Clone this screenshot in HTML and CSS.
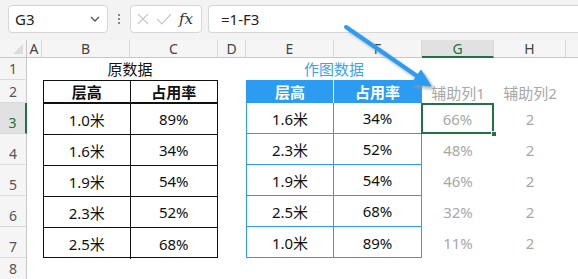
FILE: index.html
```html
<!DOCTYPE html>
<html lang="zh">
<head>
    <meta charset="UTF-8">
    <title>层高占用率</title>
    <link rel="stylesheet" href="styles.css">
</head>
<body>
    <div class="topbar">
        <div class="namebox">
            <span>G3</span>
            <svg width="12" height="8" viewBox="0 0 12 8"><path d="M2 2 L6 6 L10 2" fill="none" stroke="#555" stroke-width="1.3"/></svg>
        </div>
        <div class="dots"><i></i><i></i><i></i></div>
        <div class="fxbox">
            <svg width="16" height="16" viewBox="0 0 16 16"><path d="M3 3 L13 13 M13 3 L3 13" stroke="#c8c8c8" stroke-width="1.2"/></svg>
            <svg width="18" height="16" viewBox="0 0 18 16"><path d="M2 8 L7 13 L16 3" fill="none" stroke="#c8c8c8" stroke-width="1.2"/></svg>
            <span class="fx">fx</span>
        </div>
        <div class="formula">=1-F3</div>
    </div>

    <div class="sheet">
        <!-- column headers -->
        <div class="corner"><span></span></div>
        <div class="colhdr">A</div>
        <div class="colhdr">B</div>
        <div class="colhdr">C</div>
        <div class="colhdr">D</div>
        <div class="colhdr">E</div>
        <div class="colhdr">F</div>
        <div class="colhdr active">G</div>
        <div class="colhdr">H</div>
        <div class="colhdr last"></div>

        <!-- row headers -->
        <div class="rowhdr r1">1</div>
        <div class="rowhdr r2">2</div>
        <div class="rowhdr r3 active">3</div>
        <div class="rowhdr r4">4</div>
        <div class="rowhdr r5">5</div>
        <div class="rowhdr r6">6</div>
        <div class="rowhdr r7">7</div>
        <div class="rowhdr r8">8</div>

        <div class="title title-src">原数据</div>
        <div class="title title-chart">作图数据</div>

        <div class="tbl tbl-src">
            <div class="th">层高</div><div class="th">占用率</div>
            <div>1.0米</div><div>89%</div>
            <div>1.6米</div><div>34%</div>
            <div>1.9米</div><div>54%</div>
            <div>2.3米</div><div>52%</div>
            <div>2.5米</div><div>68%</div>
        </div>

        <div class="tbl tbl-chart">
            <div class="th">层高</div><div class="th">占用率</div>
            <div>1.6米</div><div>34%</div>
            <div>2.3米</div><div>52%</div>
            <div>1.9米</div><div>54%</div>
            <div>2.5米</div><div>68%</div>
            <div>1.0米</div><div>89%</div>
        </div>

        <div class="helper">
            <div class="hd">辅助列1</div><div class="hd">辅助列2</div>
            <div class="sel">66%<span class="handle"></span></div><div>2</div>
            <div>48%</div><div>2</div>
            <div>46%</div><div>2</div>
            <div>32%</div><div>2</div>
            <div>11%</div><div>2</div>
        </div>
    </div>

    <svg class="arrow" width="578" height="279" viewBox="0 0 578 279">
        <defs>
            <filter id="shadow" x="-20%" y="-20%" width="140%" height="140%">
                <feGaussianBlur stdDeviation="1.5"/>
            </filter>
        </defs>
        <g transform="translate(3 3)" fill="#9a9a9a" stroke="#9a9a9a" opacity="0.7" filter="url(#shadow)">
            <line x1="346" y1="27" x2="417" y2="76" stroke-width="4"/>
            <polygon points="431,86 411,84 421,70"/>
        </g>
        <g fill="#2b9cf2" stroke="#2b9cf2">
            <line x1="346" y1="27" x2="417" y2="76" stroke-width="4" stroke-linecap="round"/>
            <polygon points="431,86 411,84 421,70"/>
        </g>
    </svg>
</body>
</html>
```

FILE: styles.css
```css
:root {
    --green: #217346;
    --blue: #2b9cf2;
    --grid-line: #dadada;
    --hdr-bg: #f5f5f5;
}
* {
    box-sizing: border-box;
}
body {
    margin: 0;
    width: 578px;
    height: 279px;
    overflow: hidden;
    font-family: "Noto Sans", "Noto Sans CJK SC", sans-serif;
    background: white;
    position: relative;
}
.topbar {
    height: 40px;
    background: #f3f3f3;
    display: flex;
    align-items: flex-start;
    padding: 5px 0 0 8px;
}
.namebox {
    width: 100px;
    height: 28px;
    background: white;
    border: 1px solid #d6d6d6;
    border-radius: 4px;
    display: flex;
    align-items: center;
    justify-content: space-between;
    padding: 0 6px 0 6px;
    font-size: 15px;
    color: #222;
}
.dots {
    width: 22px;
    height: 28px;
    display: flex;
    flex-direction: column;
    align-items: center;
    justify-content: center;
    gap: 2px;
}
.dots i {
    width: 2px;
    height: 2px;
    background: #888;
}
.fxbox {
    width: 72px;
    height: 28px;
    background: white;
    border: 1px solid #d6d6d6;
    border-radius: 4px;
    display: flex;
    align-items: center;
    padding: 0 4px 0 4px;
    gap: 4px;
}
.fx {
    font-family: "DejaVu Serif", serif;
    font-style: italic;
    font-size: 15px;
    color: #333;
    margin-left: 2px;
}
.formula {
    flex: 1;
    margin-left: 6px;
    height: 28px;
    background: white;
    border: 1px solid #d6d6d6;
    border-right: none;
    border-radius: 4px 0 0 4px;
    padding: 0 0 0 12px;
    line-height: 26px;
    font-size: 15px;
    color: #222;
}
.sheet {
    display: grid;
    grid-template-columns: 27px 15px 88px 88px 28px 88px 88px 72px 72px 1fr;
    grid-template-rows: 18px 22px 23px repeat(5, 31px) 1fr;
    height: 239px;
}
.corner {
    background: var(--hdr-bg);
    border-bottom: 1px solid #c8c8c8;
    border-right: 1px solid #c8c8c8;
    position: relative;
}
.corner span {
    position: absolute;
    right: 3px;
    bottom: 3px;
    width: 0;
    height: 0;
    border-left: 10px solid transparent;
    border-bottom: 10px solid #dcdcdc;
}
.colhdr {
    background: var(--hdr-bg);
    border-bottom: 1px solid #c8c8c8;
    border-right: 1px solid var(--grid-line);
    text-align: center;
    font-size: 14px;
    line-height: 17px;
    color: #444;
}
.colhdr.active {
    background: #e1e1e1;
    border-bottom: 2px solid var(--green);
    color: var(--green);
}
.colhdr.last {
    border-right: none;
}
.rowhdr {
    grid-column: 1;
    background: var(--hdr-bg);
    border-right: 1px solid #c8c8c8;
    border-bottom: 1px solid var(--grid-line);
    font-size: 14px;
    color: #555;
    display: flex;
    align-items: flex-end;
    justify-content: center;
    padding-bottom: 1px;
}
.rowhdr.active {
    background: #e1e1e1;
    border-right: 2px solid var(--green);
    color: var(--green);
}
.r1 { grid-row: 2; }
.r2 { grid-row: 3; }
.r3 { grid-row: 4; }
.r4 { grid-row: 5; }
.r5 { grid-row: 6; }
.r6 { grid-row: 7; }
.r7 { grid-row: 8; }
.r8 { grid-row: 9; border-bottom: none; }
.title {
    grid-row: 2;
    font-size: 15px;
    text-align: center;
    line-height: 22px;
}
.title-src {
    grid-column: 3 / 5;
    color: #111;
}
.title-chart {
    grid-column: 6 / 8;
    color: #3ea2f4;
}
.tbl {
    grid-row: 3 / 9;
    display: grid;
    grid-template-columns: 1fr 1fr;
    grid-template-rows: 23px repeat(5, 31px);
    font-size: 15px;
    color: #111;
}
.tbl > div {
    display: flex;
    align-items: center;
    justify-content: center;
}
.tbl .th {
    font-weight: bold;
}
.tbl-src {
    grid-column: 3 / 5;
    margin-left: 1px;
    border: 1px solid #111;
}
.tbl-src > div {
    border-bottom: 1px solid #111;
}
.tbl-src > div:nth-child(odd) {
    border-right: 1px solid #111;
}
.tbl-src .th {
    border-bottom: 2px solid #111;
}
.tbl-src > div:nth-last-child(-n+2) {
    border-bottom: none;
}
.tbl-chart {
    grid-column: 6 / 8;
    border: 1px solid var(--blue);
    border-top: none;
}
.tbl-chart > div {
    border-bottom: 1px solid var(--blue);
}
.tbl-chart > div:nth-child(odd) {
    border-right: 1px solid var(--blue);
}
.tbl-chart .th {
    background: var(--blue);
    color: white;
    border-bottom: none;
}
.tbl-chart .th:first-child {
    border-right: 1px solid white;
}
.tbl-chart > div:nth-last-child(-n+2) {
    border-bottom: none;
}
.helper {
    grid-column: 8 / 10;
    grid-row: 3 / 9;
    display: grid;
    grid-template-columns: 72px 72px;
    grid-template-rows: 23px repeat(5, 31px);
    font-size: 15px;
    color: #a8a8a8;
}
.helper > div {
    display: flex;
    align-items: center;
    justify-content: center;
}
.helper .hd {
    align-items: flex-end;
}
.helper .sel {
    border: 2px solid var(--green);
    margin-left: -1px;
    position: relative;
}
.handle {
    position: absolute;
    right: -5px;
    bottom: -5px;
    width: 6px;
    height: 6px;
    background: var(--green);
    border: 1px solid white;
}
.arrow {
    position: absolute;
    left: 0;
    top: 0;
    pointer-events: none;
}
```
